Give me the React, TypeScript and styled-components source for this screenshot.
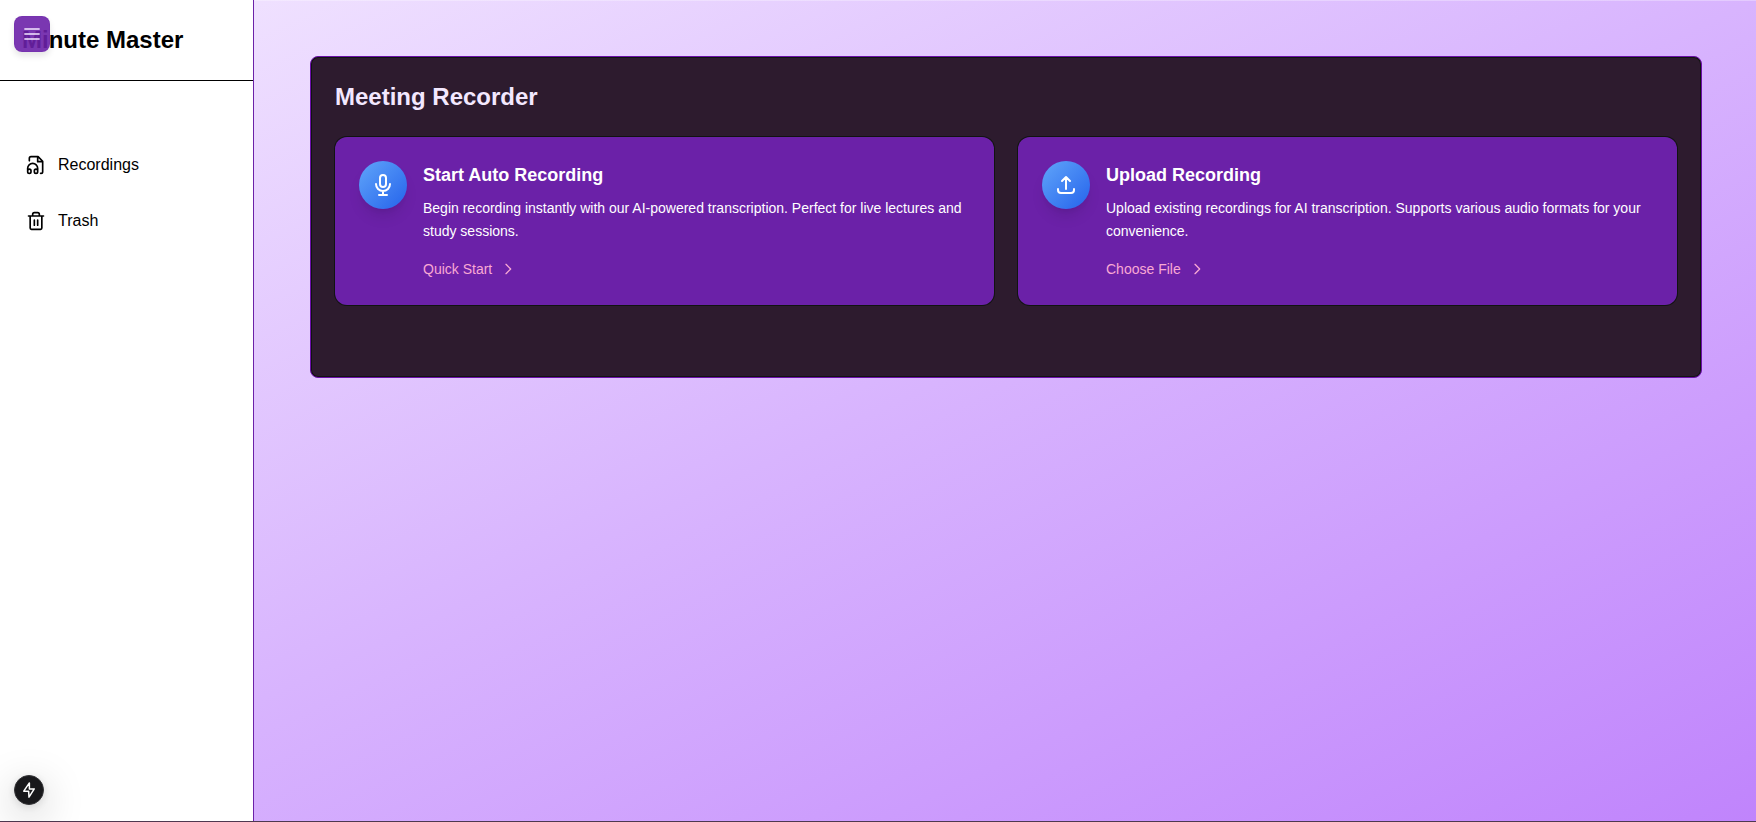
import React from "react";
import styled, { createGlobalStyle } from "styled-components";

const GlobalStyle = createGlobalStyle`
  *, *::before, *::after { box-sizing: border-box; }
  body {
    margin: 0;
    font-family: "Liberation Sans", Arial, sans-serif;
    color: #000000;
    background: #ffffff;
  }
  h1, h2, h3, p, ul { margin: 0; padding: 0; }
`;

const Page = styled.div`
  display: flex;
  min-height: 100vh;
  border-bottom: 1px solid #4e3850;
  background: linear-gradient(to bottom right, #f3e8ff, #d8b4fe, #c084fc);
`;

const Sidebar = styled.aside`
  flex: 0 0 254px;
  border-right: 1px solid #6b21a8;
  background: #ffffff;
`;

const Brand = styled.header`
  padding: 24px 22px;
  border-bottom: 1px solid #000000;
`;

const BrandTitle = styled.h1`
  font-size: 24px;
  line-height: 32px;
  font-weight: 700;
`;

const Nav = styled.nav`
  padding: 60px 16px 0;
`;

const NavList = styled.ul`
  display: flex;
  flex-direction: column;
  gap: 8px;
  list-style: none;
`;

const NavLink = styled.a`
  display: flex;
  align-items: center;
  gap: 12px;
  padding: 12px 10px;
  font-size: 16px;
  line-height: 24px;
  color: inherit;
  text-decoration: none;
`;

const Icon = styled.svg<{ $size: number }>`
  width: ${(p) => p.$size}px;
  height: ${(p) => p.$size}px;
  flex: none;
  fill: none;
  stroke: currentColor;
  stroke-width: 2;
  stroke-linecap: round;
  stroke-linejoin: round;
`;

const MenuButton = styled.button`
  position: fixed;
  top: 16px;
  left: 14px;
  z-index: 2;
  display: grid;
  place-items: center;
  width: 36px;
  height: 36px;
  padding: 0;
  border: 1px solid rgba(107, 33, 168, 0.2);
  border-radius: 8px;
  background: rgba(107, 33, 168, 0.9);
  color: #f3e8ff;
  box-shadow: 0 4px 6px rgba(0, 0, 0, 0.1);
`;

const QuickButton = styled.button`
  position: fixed;
  bottom: 17px;
  left: 14px;
  z-index: 2;
  display: grid;
  place-items: center;
  width: 30px;
  height: 30px;
  padding: 0;
  border: 1px solid #333336;
  border-radius: 50%;
  background: #18181b;
  color: #ffffff;
  box-shadow: 0 11px 40px rgba(0, 0, 0, 0.25), 0 2px 10px rgba(0, 0, 0, 0.12);
`;

const Main = styled.main`
  flex: 1;
  min-width: 0;
  padding: 56px 54px 56px 56px;
  box-shadow: inset 0 1px 0 rgba(255, 255, 255, 0.3);
`;

const Panel = styled.section`
  padding: 24px 24px 72px;
  border: 1px solid #6b0fa8;
  border-radius: 8px;
  background: #2d1b2e;
  box-shadow: inset 0 0 0 1px #111411;
`;

const PanelTitle = styled.h2`
  margin-bottom: 24px;
  font-size: 24px;
  line-height: 32px;
  font-weight: 700;
  color: #f3e8ff;
`;

const CardGrid = styled.div`
  display: grid;
  grid-template-columns: repeat(auto-fit, minmax(320px, 1fr));
  gap: 24px;
`;

const Card = styled.article`
  display: flex;
  align-items: flex-start;
  gap: 16px;
  padding: 24px;
  border-radius: 12px;
  background: #6b21a8;
  color: #ffffff;
  box-shadow: 0 0 0 1px #111411;
`;

const IconDisc = styled.div`
  display: grid;
  place-items: center;
  flex: none;
  width: 48px;
  height: 48px;
  border-radius: 50%;
  background: linear-gradient(to bottom right, #60a5fa, #2563eb);
  box-shadow: 0 10px 15px -3px rgba(0, 0, 0, 0.1), 0 4px 6px -4px rgba(0, 0, 0, 0.1);
`;

const CardBody = styled.div`
  flex: 1;
  min-width: 0;
`;

const CardTitle = styled.h3`
  margin-bottom: 8px;
  font-size: 18px;
  line-height: 28px;
  font-weight: 700;
`;

const CardText = styled.p`
  margin-bottom: 16px;
  font-size: 14px;
  line-height: 23px;
`;

const CardAction = styled.button`
  display: flex;
  align-items: center;
  gap: 8px;
  padding: 0 0 2px;
  border: 0;
  background: none;
  font: inherit;
  font-size: 14px;
  line-height: 20px;
  color: #f9a8d4;
`;

const MicIcon = () => (
  <Icon $size={24} viewBox="0 0 24 24" aria-hidden="true">
    <path d="M19 11a7 7 0 0 1-7 7m0 0a7 7 0 0 1-7-7m7 7v4m0 0H8m4 0h4m-4-8a3 3 0 0 1-3-3V5a3 3 0 1 1 6 0v6a3 3 0 0 1-3 3z" />
  </Icon>
);

const UploadIcon = () => (
  <Icon $size={24} viewBox="0 0 24 24" aria-hidden="true">
    <path d="M4 16v1a3 3 0 0 0 3 3h10a3 3 0 0 0 3-3v-1m-4-8-4-4m0 0L8 8m4-4v12" />
  </Icon>
);

const ChevronIcon = () => (
  <Icon $size={16} viewBox="0 0 24 24" aria-hidden="true">
    <path d="m9 5 7 7-7 7" />
  </Icon>
);

const RecordingsIcon = () => (
  <Icon $size={20} viewBox="0 0 24 24" aria-hidden="true">
    <path d="M14 2v6h6M4 7V4a2 2 0 0 1 2-2h8.5L20 7.5V20a2 2 0 0 1-2 2h-.5" />
    <path d="M2 19a2 2 0 1 1 4 0v1a2 2 0 1 1-4 0v-4a6 6 0 0 1 12 0v4a2 2 0 1 1-4 0v-1a2 2 0 1 1 4 0" />
  </Icon>
);

const TrashIcon = () => (
  <Icon $size={20} viewBox="0 0 24 24" aria-hidden="true">
    <path d="M3 6h18M19 6v14.500a1.500 1.500 0 0 1-1.500 1.500h-11A1.500 1.500 0 0 1 5 20.500V6M8 6V4a2 2 0 0 1 2-2h4a2 2 0 0 1 2 2v2M10 11v6M14 11v6" />
  </Icon>
);

const cards = [
  {
    title: "Start Auto Recording",
    text: "Begin recording instantly with our AI-powered transcription. Perfect for live lectures and study sessions.",
    action: "Quick Start",
    icon: <MicIcon />,
  },
  {
    title: "Upload Recording",
    text: "Upload existing recordings for AI transcription. Supports various audio formats for your convenience.",
    action: "Choose File",
    icon: <UploadIcon />,
  },
];

export default function App() {
  return (
    <Page>
      <GlobalStyle />
      <MenuButton type="button" aria-label="Toggle menu">
        <Icon $size={20} viewBox="0 0 24 24" aria-hidden="true">
          <path d="M3.5 6h17M3.5 12h17M3.5 18h17" />
        </Icon>
      </MenuButton>
      <Sidebar>
        <Brand>
          <BrandTitle>Minute Master</BrandTitle>
        </Brand>
        <Nav>
          <NavList>
            <li>
              <NavLink href="#recordings">
                <RecordingsIcon />
                Recordings
              </NavLink>
            </li>
            <li>
              <NavLink href="#trash">
                <TrashIcon />
                Trash
              </NavLink>
            </li>
          </NavList>
        </Nav>
      </Sidebar>
      <Main>
        <Panel>
          <PanelTitle>Meeting Recorder</PanelTitle>
          <CardGrid>
            {cards.map((card) => (
              <Card key={card.title}>
                <IconDisc>{card.icon}</IconDisc>
                <CardBody>
                  <CardTitle>{card.title}</CardTitle>
                  <CardText>{card.text}</CardText>
                  <CardAction type="button">
                    {card.action}
                    <ChevronIcon />
                  </CardAction>
                </CardBody>
              </Card>
            ))}
          </CardGrid>
        </Panel>
      </Main>
      <QuickButton type="button" aria-label="Quick actions">
        <Icon $size={18} viewBox="0 0 24 24" aria-hidden="true">
          <path d="M12.500 2.500 5 13.500h6.500l.5 8 7-11h-6.500z" />
        </Icon>
      </QuickButton>
    </Page>
  );
}
